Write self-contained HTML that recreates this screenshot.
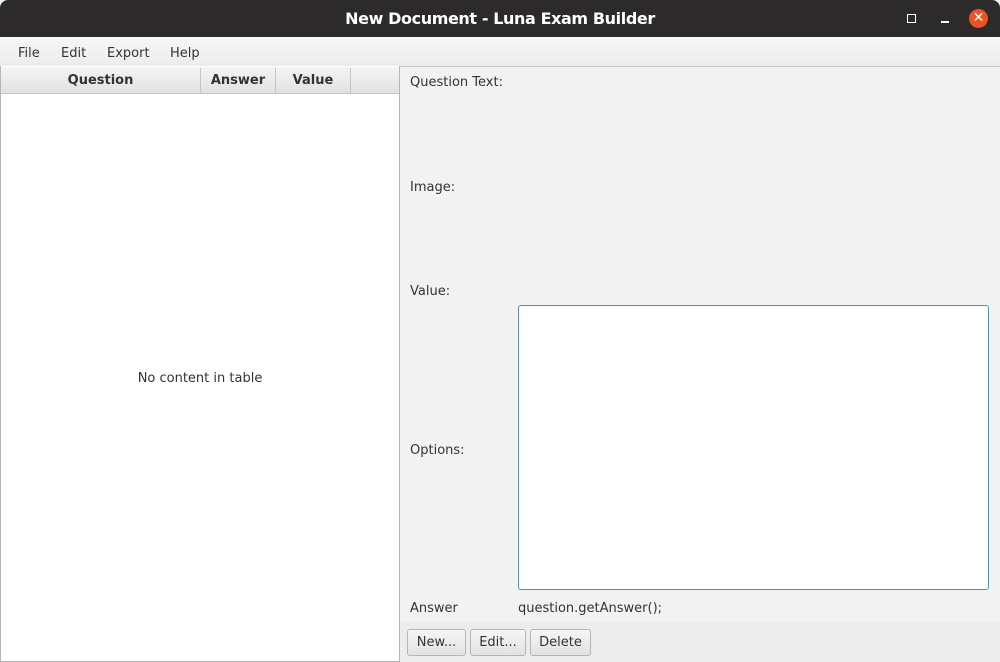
<html><head><style>
body{margin:0;width:1000px;height:662px;overflow:hidden;background:#f2f2f2;font-family:"DejaVu Sans","Liberation Sans",sans-serif;font-size:13px;color:#333;position:relative}
.a{position:absolute}
</style></head><body>
<div class="a" style="left:0;top:0;width:1000px;height:37px;background:#2c2a2a;border-radius:8px 8px 0 0"></div>
<div class="a" style="left:0;top:9px;width:1000px;text-align:center;color:#fff;font-weight:bold;font-size:16px;letter-spacing:-0.4px">New Document - Luna Exam Builder</div>
<div class="a" style="left:907px;top:14px;width:7px;height:7px;border:1.5px solid #fff"></div>
<div class="a" style="left:941px;top:21px;width:8px;height:1.5px;background:#fff"></div>
<div class="a" style="left:969px;top:9px;width:19px;height:19px;border-radius:50%;background:#e95420;color:#fff;text-align:center;line-height:19px;font-size:14px">✕</div>
<div class="a" style="left:0;top:37px;width:1000px;height:29px;background:linear-gradient(#f7f7f7,#ececec);border-bottom:1px solid #c8c8c8"></div>
<div class="a" style="left:18px;top:46px">File</div>
<div class="a" style="left:61px;top:46px">Edit</div>
<div class="a" style="left:107px;top:46px">Export</div>
<div class="a" style="left:170px;top:46px">Help</div>
<div class="a" style="left:0;top:66px;width:398px;height:595px;background:#fff;border:1px solid #b5b5b5;border-top:none"></div>
<div class="a" style="left:1px;top:67px;width:398px;height:26px;background:linear-gradient(#f4f4f4,#e2e2e2);border-bottom:1px solid #c5c5c5"></div>
<div class="a" style="left:1px;top:68px;width:199px;height:26px;border-right:1px solid #c5c5c5;text-align:center;line-height:26px;font-weight:bold">Question</div>
<div class="a" style="left:201px;top:68px;width:74px;height:26px;border-right:1px solid #c5c5c5;text-align:center;line-height:26px;font-weight:bold">Answer</div>
<div class="a" style="left:276px;top:68px;width:74px;height:26px;border-right:1px solid #c5c5c5;text-align:center;line-height:26px;font-weight:bold">Value</div>
<div class="a" style="left:0;top:371px;width:400px;text-align:center">No content in table</div>
<div class="a" style="left:410px;top:75px">Question Text:</div>
<div class="a" style="left:410px;top:180px">Image:</div>
<div class="a" style="left:410px;top:284px">Value:</div>
<div class="a" style="left:410px;top:443px">Options:</div>
<div class="a" style="left:518px;top:305px;width:469px;height:283px;background:#fff;border:1.5px solid #3399cc;border-radius:3px"></div>
<div class="a" style="left:410px;top:601px">Answer</div>
<div class="a" style="left:518px;top:601px">question.getAnswer();</div>
<div class="a" style="left:400px;top:622px;width:600px;height:40px;background:#ececec"></div>
<div class="a" style="left:407px;top:629px;width:57px;height:25px;border:1px solid #b5b5b5;border-radius:3px;background:linear-gradient(#f6f6f6,#e2e2e2);text-align:center;line-height:25px">New...</div>
<div class="a" style="left:470px;top:629px;width:54px;height:25px;border:1px solid #b5b5b5;border-radius:3px;background:linear-gradient(#f6f6f6,#e2e2e2);text-align:center;line-height:25px">Edit...</div>
<div class="a" style="left:530px;top:629px;width:59px;height:25px;border:1px solid #b5b5b5;border-radius:3px;background:linear-gradient(#f6f6f6,#e2e2e2);text-align:center;line-height:25px">Delete</div>
</body></html>
